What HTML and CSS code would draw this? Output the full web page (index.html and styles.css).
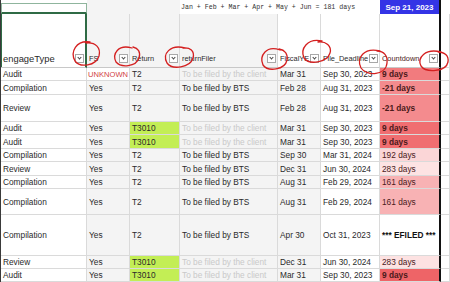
FILE: index.html
```html
<!DOCTYPE html>
<html lang="en">
<head>
    <meta charset="UTF-8">
    <title>Filing tracker</title>
    <link rel="stylesheet" href="styles.css">
</head>
<body>
<div class="sheet">
    <div class="row top">
        <div class="cell sel_top"></div>
        <div class="cell shade"></div>
        <div class="cell shade"></div>
        <div class="cell formula">Jan + Feb + Mar + Apr + May + Jun = 181 days</div>
        <div class="cell"></div>
        <div class="cell"></div>
        <div class="cell today">Sep 21, 2023</div>
        <div class="cell"></div>
    </div>
    <div class="row head">
        <div class="cell hd sel"><span class="lbl big">engageType</span><span class="fbtn"></span></div>
        <div class="cell hd shade"><span class="lbl">FS</span><span class="fbtn"></span></div>
        <div class="cell hd shade"><span class="lbl">Return</span><span class="fbtn"></span></div>
        <div class="cell hd shade"><span class="lbl">returnFiler</span><span class="fbtn"></span></div>
        <div class="cell hd"><span class="lbl">FiscalYE</span><span class="fbtn"></span></div>
        <div class="cell hd"><span class="lbl">File_Deadline</span><span class="fbtn"></span></div>
        <div class="cell hd cd"><span class="lbl">Countdown</span><span class="fbtn"></span></div>
        <div class="cell"></div>
    </div>

    <div class="row">
        <div class="cell">Audit</div><div class="cell unknown">UNKNOWN</div><div class="cell shade">T2</div>
        <div class="cell shade client">To be filed by the client</div><div class="cell shade">Mar 31</div><div class="cell">Sep 30, 2023</div>
        <div class="cell cd urgent" style="background:#f27b7e">9 days</div><div class="cell"></div>
    </div>
    <div class="row r14">
        <div class="cell">Compilation</div><div class="cell shade">Yes</div><div class="cell shade">T2</div>
        <div class="cell shade">To be filed by BTS</div><div class="cell shade">Feb 28</div><div class="cell">Aug 31, 2023</div>
        <div class="cell cd urgent" style="background:#f48b8e">-21 days</div><div class="cell"></div>
    </div>
    <div class="row r27">
        <div class="cell">Review</div><div class="cell shade">Yes</div><div class="cell shade">T2</div>
        <div class="cell shade">To be filed by BTS</div><div class="cell shade">Feb 28</div><div class="cell">Aug 31, 2023</div>
        <div class="cell cd urgent" style="background:#f48b8e">-21 days</div><div class="cell"></div>
    </div>
    <div class="row">
        <div class="cell">Audit</div><div class="cell shade">Yes</div><div class="cell t3010">T3010</div>
        <div class="cell shade client">To be filed by the client</div><div class="cell shade">Mar 31</div><div class="cell">Sep 30, 2023</div>
        <div class="cell cd urgent" style="background:#f06e71">9 days</div><div class="cell"></div>
    </div>
    <div class="row r14">
        <div class="cell">Audit</div><div class="cell shade">Yes</div><div class="cell t3010">T3010</div>
        <div class="cell shade client">To be filed by the client</div><div class="cell shade">Mar 31</div><div class="cell">Sep 30, 2023</div>
        <div class="cell cd urgent" style="background:#f06e71">9 days</div><div class="cell"></div>
    </div>
    <div class="row">
        <div class="cell">Compilation</div><div class="cell shade">Yes</div><div class="cell shade">T2</div>
        <div class="cell shade">To be filed by BTS</div><div class="cell shade">Sep 30</div><div class="cell">Mar 31, 2024</div>
        <div class="cell cd" style="background:#fbd6d7">192 days</div><div class="cell"></div>
    </div>
    <div class="row r14">
        <div class="cell">Review</div><div class="cell shade">Yes</div><div class="cell shade">T2</div>
        <div class="cell shade">To be filed by BTS</div><div class="cell shade">Dec 31</div><div class="cell">Jun 30, 2024</div>
        <div class="cell cd" style="background:#fde3e3">283 days</div><div class="cell"></div>
    </div>
    <div class="row">
        <div class="cell">Compilation</div><div class="cell shade">Yes</div><div class="cell shade">T2</div>
        <div class="cell shade">To be filed by BTS</div><div class="cell shade">Aug 31</div><div class="cell">Feb 29, 2024</div>
        <div class="cell cd" style="background:#f8b2b4">161 days</div><div class="cell"></div>
    </div>
    <div class="row r26">
        <div class="cell">Compilation</div><div class="cell shade">Yes</div><div class="cell shade">T2</div>
        <div class="cell shade">To be filed by BTS</div><div class="cell shade">Aug 31</div><div class="cell">Feb 29, 2024</div>
        <div class="cell cd" style="background:#f8b2b4">161 days</div><div class="cell"></div>
    </div>
    <div class="row r41">
        <div class="cell">Compilation</div><div class="cell shade">Yes</div><div class="cell shade">T2</div>
        <div class="cell shade">To be filed by BTS</div><div class="cell shade">Apr 30</div><div class="cell">Oct 31, 2023</div>
        <div class="cell cd efiled">*** EFILED ***</div><div class="cell"></div>
    </div>
    <div class="row">
        <div class="cell">Review</div><div class="cell shade">Yes</div><div class="cell t3010">T3010</div>
        <div class="cell shade client">To be filed by the client</div><div class="cell shade">Dec 31</div><div class="cell">Jun 30, 2024</div>
        <div class="cell cd" style="background:#fde2e2">283 days</div><div class="cell"></div>
    </div>
    <div class="row">
        <div class="cell">Audit</div><div class="cell shade">Yes</div><div class="cell t3010">T3010</div>
        <div class="cell shade client">To be filed by the client</div><div class="cell shade">Mar 31</div><div class="cell">Sep 30, 2023</div>
        <div class="cell cd urgent" style="background:#ee6467">9 days</div><div class="cell"></div>
    </div>
</div>

<svg class="marks" width="450" height="282" viewBox="0 0 450 282">
    <path d="M90 42 C76 40 70 52 75 61 C80 68 96 66 99 56 C101 48 96 42 86 43"/>
    <path d="M132 48 C118 44 112 54 116 62 C121 68 136 67 139 58 C141 52 138 48 133 47"/>
    <path d="M185 48 C170 44 162 54 167 63 C172 70 190 68 193 58 C195 51 190 47 183 48"/>
    <path d="M280 50 C266 45 259 56 263 65 C268 72 285 70 287 60 C288 54 285 50 279 49"/>
    <path d="M322 41 C307 38 300 49 304 58 C309 65 327 63 330 53 C332 46 326 41 318 42"/>
    <path d="M380 51 C364 47 356 58 361 68 C367 77 386 75 387 63 C388 56 384 51 377 51"/>
    <path d="M441 52 C425 48 417 58 421 66 C426 73 446 72 448 62 C449 56 445 52 438 52"/>
</svg>
</body>
</html>
```

FILE: styles.css
```css
*{
    margin:0;
    padding:0;
    box-sizing:border-box;
}
body{
    width:450px;
    height:282px;
    overflow:hidden;
    position:relative;
    background:#fff;
    font-family:"Liberation Sans", Arial, sans-serif;
    font-size:8.3px;
    color:#2a2a2a;
}
.sheet{
    border-left:1px solid #3a3a3a;
}
.row{
    display:grid;
    grid-template-columns:86px 43px 50px 98px 43px 59px 61px 1fr;
    height:13px;
}
.r14{
    height:14px;
}
.r26{
    height:26px;
}
.r27{
    height:27px;
}
.r41{
    height:41px;
}
.cell{
    display:flex;
    align-items:center;
    padding-left:2px;
    white-space:nowrap;
    overflow:hidden;
    border-right:1px solid #dadada;
    border-bottom:1px solid #dadada;
}
.shade{
    background:#f4f4f4;
}
.cell.cd{
    border-right:2px solid #111;
}
.top{
    height:14px;
}
.top .cell{
    border:none;
}
.sel_top{
    margin-top:3px;
    border:1px solid #8fb59d !important;
    border-bottom:2px solid #2f6b45 !important;
}
.formula{
    overflow:visible;
    padding-left:1px;
    font-family:"Liberation Mono", monospace;
    font-size:6.6px;
    color:#333;
}
.top .today{
    justify-content:center;
    padding:0;
    background:#3434e6;
    color:#fff;
    font-weight:bold;
    font-size:8px;
    border-right:2px solid #111;
}
.head{
    height:54px;
}
.hd{
    align-items:flex-end;
    padding-bottom:3px;
    border-bottom-color:#c8c8c8;
}
.hd.sel{
    border-right:2px solid #2f6b45;
    box-shadow:inset 1px 0 0 #2f6b45;
}
.lbl{
    flex:1;
    overflow:hidden;
    font-size:7.4px;
    line-height:10px;
}
.lbl.big{
    font-size:9.4px;
}
.fbtn{
    flex:none;
    width:9px;
    height:9px;
    margin:0 1px 1px 1px;
    border:1px solid #a8a8a8;
    background:#fff;
    position:relative;
}
.fbtn:after{
    content:"";
    position:absolute;
    left:2px;
    top:1px;
    width:2px;
    height:2px;
    border-right:1px solid #444;
    border-bottom:1px solid #444;
    transform:rotate(45deg);
}
.unknown{
    padding-left:1px;
    font-size:7.6px;
    color:#d23f3f;
}
.t3010{
    background:#c3ee55;
}
.client{
    color:#c9c9c9;
}
.urgent{
    font-weight:bold;
    color:#3a0506;
}
.cd{
    color:#4a1a1a;
}
.efiled{
    font-weight:bold;
    color:#111;
}
.marks{
    position:absolute;
    left:0;
    top:0;
    pointer-events:none;
}
.marks path{
    fill:none;
    stroke:#d42020;
    stroke-width:1.3;
    stroke-linecap:round;
}
```
